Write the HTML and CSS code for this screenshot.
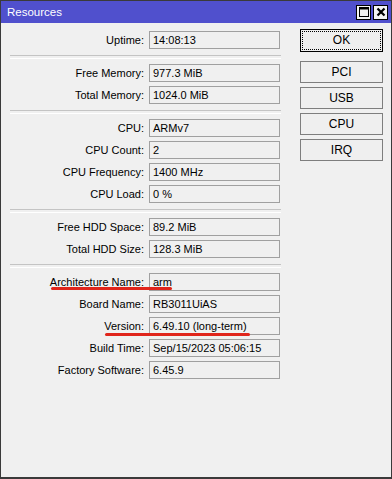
FILE: index.html
```html
<!DOCTYPE html>
<html lang="en">

<head>
    <meta charset="UTF-8">
    <meta name="viewport" content="width=device-width, initial-scale=1.0">
    <title>Resources</title>
    <link rel="stylesheet" href="styles.css">
</head>

<body>
    <div class="window">
        <div class="titlebar">
            <span class="title">Resources</span>
            <div class="title-buttons">
                <span class="tb-btn">
                    <svg width="12" height="12" viewBox="0 0 12 12">
                        <rect x="1.5" y="1.5" width="9" height="9" fill="none" stroke="#000" stroke-width="1" />
                        <line x1="1.5" y1="2.5" x2="10.5" y2="2.5" stroke="#000" stroke-width="2" />
                    </svg>
                </span>
                <span class="tb-btn">
                    <svg width="12" height="12" viewBox="0 0 12 12">
                        <path d="M2.5 2.5 L9.5 9.5 M9.5 2.5 L2.5 9.5" stroke="#000" stroke-width="2.2" />
                    </svg>
                </span>
            </div>
        </div>

        <div class="content">
            <div class="fields">
                <div class="row"><label>Uptime:</label><div class="value">14:08:13</div></div>
                <div class="sep"></div>
                <div class="row"><label>Free Memory:</label><div class="value">977.3 MiB</div></div>
                <div class="row"><label>Total Memory:</label><div class="value">1024.0 MiB</div></div>
                <div class="sep"></div>
                <div class="row"><label>CPU:</label><div class="value">ARMv7</div></div>
                <div class="row"><label>CPU Count:</label><div class="value">2</div></div>
                <div class="row"><label>CPU Frequency:</label><div class="value">1400 MHz</div></div>
                <div class="row"><label>CPU Load:</label><div class="value">0 %</div></div>
                <div class="sep"></div>
                <div class="row"><label>Free HDD Space:</label><div class="value">89.2 MiB</div></div>
                <div class="row"><label>Total HDD Size:</label><div class="value">128.3 MiB</div></div>
                <div class="sep"></div>
                <div class="row"><label>Architecture Name:</label><div class="value">arm</div></div>
                <div class="row"><label>Board Name:</label><div class="value">RB3011UiAS</div></div>
                <div class="row"><label>Version:</label><div class="value">6.49.10 (long-term)</div></div>
                <div class="row"><label>Build Time:</label><div class="value">Sep/15/2023 05:06:15</div></div>
                <div class="row"><label>Factory Software:</label><div class="value">6.45.9</div></div>
            </div>

            <div class="buttons">
                <button class="btn btn-default"><span>OK</span></button>
                <button class="btn">PCI</button>
                <button class="btn">USB</button>
                <button class="btn">CPU</button>
                <button class="btn">IRQ</button>
            </div>
        </div>

        <!-- red marks drawn over the screenshot -->
        <span class="mark mark-arch"></span>
        <span class="mark mark-version"></span>
    </div>
</body>

</html>
```

FILE: styles.css
```css
* {
    box-sizing: border-box;
}

body {
    margin: 0;
    font-family: 'Liberation Sans', Arial, sans-serif;
    font-size: 11px;
    color: #000;
    background: #f0f0f0;
}

.window {
    position: relative;
    width: 392px;
    height: 479px;
    border: 1px solid #3a3a3a;
    border-bottom-width: 2px;
    background: #f0f0f0;
}

.titlebar {
    height: 22px;
    background: #5050cd;
    display: flex;
    align-items: center;
    justify-content: space-between;
    padding: 0 3px 0 6px;
}

.title {
    color: #fff;
    font-size: 11.5px;
}

.title-buttons {
    display: flex;
    gap: 2px;
}

.tb-btn {
    width: 15px;
    height: 15px;
    background: #f4f4f4;
    border: 1px solid #000;
    display: flex;
    align-items: center;
    justify-content: center;
}

.content {
    display: flex;
    padding: 6px 0 0 9px;
}

.fields {
    width: 271px;
}

.row {
    display: flex;
    align-items: center;
    height: 22px;
}

.row label {
    width: 136px;
    text-align: right;
    padding-right: 2px;
    white-space: nowrap;
}

.value {
    margin-left: 3px;
    width: 131px;
    height: 18px;
    border: 1px solid #a0a0a0;
    padding: 0 3px;
    line-height: 16px;
    white-space: nowrap;
}

.sep {
    height: 11px;
    display: flex;
    align-items: center;
}

.sep::before {
    content: "";
    display: block;
    width: 100%;
    height: 2px;
    border-top: 1px solid #c4c4c4;
    border-bottom: 1px solid #fff;
}

.buttons {
    margin-left: 19px;
    width: 83px;
    display: flex;
    flex-direction: column;
    gap: 4px;
}

.btn {
    font-family: inherit;
    font-size: 12px;
    height: 22px;
    padding: 0;
    margin: 0;
    background: #efefef;
    border: 1px solid #7e7e7e;
    color: #000;
}

.btn-default {
    height: 23px;
    border-color: #000;
    padding: 1px;
    margin-bottom: 5px;
}

.btn-default span {
    display: block;
    height: 100%;
    line-height: 17px;
    border: 1px dotted #000;
}

.mark {
    position: absolute;
    height: 3px;
    background: #e0251b;
    border-radius: 2px;
}

.mark-arch {
    left: 50px;
    top: 286px;
    width: 121px;
}

.mark-version {
    left: 104px;
    top: 332px;
    width: 145px;
}
```
